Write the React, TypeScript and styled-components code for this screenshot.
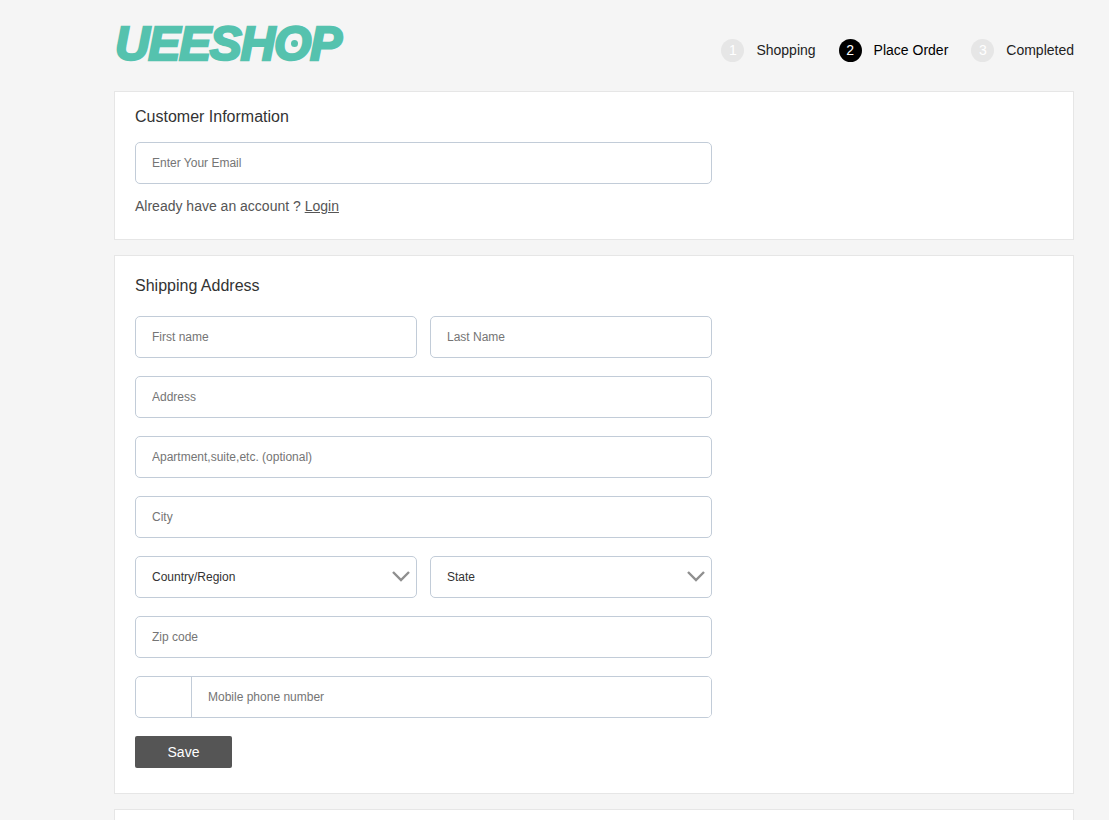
import React from "react";
import styled, { createGlobalStyle } from "styled-components";

const GlobalStyle = createGlobalStyle`
  html, body {
    margin: 0;
    padding: 0;
    background-color: #f5f5f5;
    font-family: "Liberation Sans", Arial, sans-serif;
  }
  * {
    box-sizing: border-box;
  }
`;

const Page = styled.div`
  width: 960px;
  margin-left: 114px;
`;

const Header = styled.header`
  height: 91px;
  display: flex;
  justify-content: space-between;
  align-items: flex-start;
`;

const Logo = styled.div`
  margin: 17px 0 0 1px;
  height: 54px;
  font-size: 48px;
  line-height: 54px;
  font-weight: 700;
  font-style: italic;
  letter-spacing: -1.3px;
  color: #55c2ae;
  -webkit-text-stroke: 2.4px #55c2ae;
  white-space: nowrap;
`;

/* the logo's O has a small dot in the middle of its counter */
const LogoO = styled.span`
  position: relative;
  &::after {
    content: "";
    position: absolute;
    left: 17px;
    top: 23px;
    width: 7px;
    height: 7px;
    border-radius: 50%;
    background-color: #55c2ae;
  }
`;

const Steps = styled.ol`
  list-style: none;
  margin: 39px 0 0;
  padding: 0;
  display: flex;
  gap: 23px;
`;

const Step = styled.li<{ $active?: boolean }>`
  display: flex;
  align-items: center;
  gap: 12px;
  height: 23px;
  font-size: 14px;
  color: ${(p) => (p.$active ? "#000" : "#222")};
`;

const StepLabel = styled.span`
  margin-bottom: 2px;
`;

const StepNumber = styled.span<{ $active?: boolean }>`
  width: 23px;
  height: 23px;
  border-radius: 50%;
  display: flex;
  align-items: center;
  justify-content: center;
  font-size: 14px;
  padding-bottom: 1px;
  color: #fff;
  background-color: ${(p) => (p.$active ? "#000" : "#e6e6e6")};
`;

const Card = styled.section`
  background-color: #fff;
  border: 1px solid #e6e6e6;
  padding: 0 20px;
  margin-bottom: 15px;
`;

const CustomerCard = styled(Card)`
  height: 149px;
  padding-top: 16px;
`;

const ShippingCard = styled(Card)`
  height: 539px;
  padding-top: 21px;
`;

const PaymentCard = styled(Card)`
  height: 200px;
`;

const Title = styled.h2`
  margin: 0;
  font-size: 16px;
  line-height: 18px;
  font-weight: 400;
  color: #333;
`;

const Form = styled.div`
  width: 577px;
  margin-top: 21px;
  display: flex;
  flex-direction: column;
  gap: 18px;
`;

const EmailForm = styled(Form)`
  margin-top: 16px;
`;

const Row = styled.div`
  display: grid;
  grid-template-columns: 1fr 1fr;
  gap: 13px;
`;

const Input = styled.input`
  display: block;
  width: 100%;
  height: 42px;
  padding: 0 16px;
  border: 1px solid #c2ccd8;
  border-radius: 5px;
  background-color: #fff;
  font-family: inherit;
  font-size: 12px;
  color: #333;
  outline: none;
  &::placeholder {
    color: #757575;
    opacity: 1;
  }
`;

const SelectWrap = styled.div`
  position: relative;
  & svg {
    position: absolute;
    top: 14px;
    right: 6px;
    pointer-events: none;
  }
`;

const Select = styled.select`
  display: block;
  width: 100%;
  height: 42px;
  padding: 0 16px;
  border: 1px solid #c2ccd8;
  border-radius: 5px;
  background-color: #fff;
  font-family: inherit;
  font-size: 12px;
  color: #333;
  outline: none;
  appearance: none;
`;

const PhoneField = styled.div`
  height: 42px;
  display: flex;
  border: 1px solid #c2ccd8;
  border-radius: 5px;
  overflow: hidden;
`;

const PhonePrefix = styled.div`
  width: 56px;
  border-right: 1px solid #c2ccd8;
`;

const PhoneInput = styled(Input)`
  flex: 1;
  height: 40px;
  border: 0;
  border-radius: 0;
`;

const AccountLine = styled.p`
  margin: 14px 0 0;
  font-size: 14px;
  line-height: 16px;
  color: #555;
  & a {
    color: #555;
    text-decoration: underline;
  }
`;

const SaveButton = styled.button`
  display: block;
  width: 97px;
  height: 32px;
  padding: 0;
  border: 0;
  border-radius: 2px;
  background-color: #555;
  color: #fff;
  font-family: inherit;
  font-size: 14px;
  cursor: pointer;
`;

const Chevron = () => (
  <svg width="20" height="12" viewBox="0 0 20 12" fill="none">
    <path d="M2 2l8 8 8-8" stroke="#8f8f8f" strokeWidth="2.4" />
  </svg>
);

const DropDown = ({ label }: { label: string }) => (
  <SelectWrap>
    <Select defaultValue={label}>
      <option>{label}</option>
    </Select>
    <Chevron />
  </SelectWrap>
);

const steps = ["Shopping", "Place Order", "Completed"];

const App = () => {
  return (
    <Page>
      <GlobalStyle />
      <Header>
        <Logo>
          UEESH<LogoO>O</LogoO>P
        </Logo>
        <Steps>
          {steps.map((name, i) => (
            <Step key={name} $active={i === 1}>
              <StepNumber $active={i === 1}>{i + 1}</StepNumber>
              <StepLabel>{name}</StepLabel>
            </Step>
          ))}
        </Steps>
      </Header>

      <CustomerCard>
        <Title>Customer Information</Title>
        <EmailForm>
          <Input placeholder="Enter Your Email" />
        </EmailForm>
        <AccountLine>
          Already have an account ? <a href="#login">Login</a>
        </AccountLine>
      </CustomerCard>

      <ShippingCard>
        <Title>Shipping Address</Title>
        <Form>
          <Row>
            <Input placeholder="First name" />
            <Input placeholder="Last Name" />
          </Row>
          <Input placeholder="Address" />
          <Input placeholder="Apartment,suite,etc. (optional)" />
          <Input placeholder="City" />
          <Row>
            <DropDown label="Country/Region" />
            <DropDown label="State" />
          </Row>
          <Input placeholder="Zip code" />
          <PhoneField>
            <PhonePrefix />
            <PhoneInput placeholder="Mobile phone number" />
          </PhoneField>
          <SaveButton>Save</SaveButton>
        </Form>
      </ShippingCard>

      <PaymentCard />
    </Page>
  );
};

export default App;
